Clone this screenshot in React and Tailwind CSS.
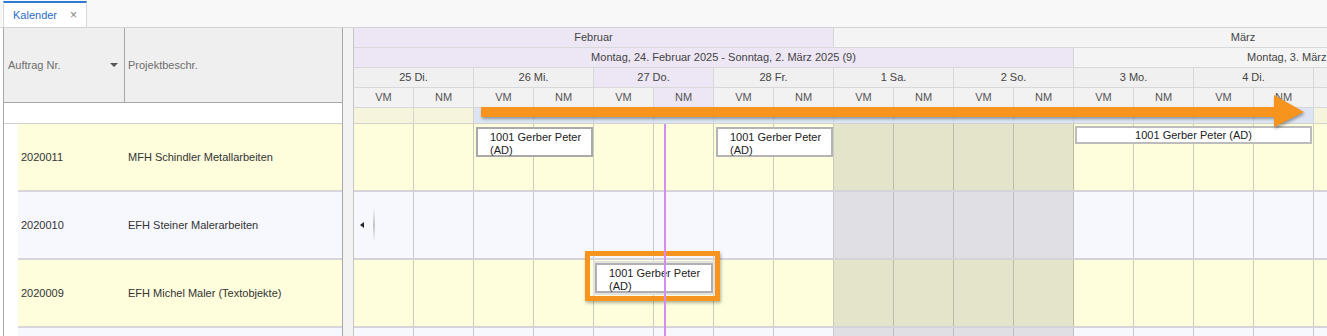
import React from "react";

const days = [
  { label: "25 Di." },
  { label: "26 Mi." },
  { label: "27 Do.", today: true },
  { label: "28 Fr." },
  { label: "1 Sa.", weekend: true },
  { label: "2 So.", weekend: true },
  { label: "3 Mo." },
  { label: "4 Di." },
  { label: "5 Mi." },
];

const halves = days.flatMap((d, i) => [
  { ...d, half: "VM", idx: i * 2 },
  { ...d, half: "NM", idx: i * 2 + 1 },
]);

const rows = [
  { nr: "2020011", name: "MFH Schindler Metallarbeiten", tone: "yellow" },
  { nr: "2020010", name: "EFH Steiner Malerarbeiten", tone: "blue" },
  { nr: "2020009", name: "EFH Michel Maler (Textobjekte)", tone: "yellow" },
  { nr: "", name: "", tone: "blue" },
];

function cellTone(tone, weekend) {
  if (tone === "yellow") {
    return weekend
      ? "bg-[#e3e4c9] border-[#bbbca6]"
      : "bg-[#fefedd] border-[#cbcbb9]";
  }
  return weekend
    ? "bg-[#dfdfe4] border-[#bdbdc3]"
    : "bg-[#f7f8fd] border-[#c9c9d0]";
}

function Appointment({ className, single }) {
  return (
    <div
      className={
        "absolute bg-white border-2 text-[#222] text-[11px] leading-[13px] " +
        className
      }
    >
      {single ? (
        <div className="text-center pt-[1px]">1001 Gerber Peter (AD)</div>
      ) : (
        <div className="pl-[12px] pt-[2px]">
          1001 Gerber Peter
          <br />
          (AD)
        </div>
      )}
    </div>
  );
}

export default function App() {
  return (
    <div
      className="w-[1327px] h-[336px] overflow-hidden bg-white text-[11px] text-[#333]"
      style={{ fontFamily: '"Liberation Sans", Arial, sans-serif' }}
    >
      {/* Tab-Leiste */}
      <div className="h-[28px] flex items-end pl-[3px] bg-[#f8f8f8] border-b border-[#d2d2d2]">
        <div className="h-[26px] w-[84px] bg-white border-t-2 border-t-[#2f7bd5] border-x border-x-[#d8d8d8] flex items-center pl-[9px]">
          <span className="text-[#2a6cc8] text-[11px]">Kalender</span>
          <span className="ml-auto mr-[9px] text-[#808080] text-[12px]">×</span>
        </div>
      </div>

      <div className="flex h-[308px] pl-[3px]">
        {/* Linke Tabelle */}
        <div className="w-[340px] shrink-0 border-l border-r border-[#a8a8a8] flex flex-col">
          <div className="h-[75px] shrink-0 flex bg-[#efefef] border-b border-[#a8a8a8] text-[#6e6e6e]">
            <div className="w-[121px] border-r border-[#a8a8a8] flex items-center pl-[4px] pr-[6px]">
              <span>Auftrag Nr.</span>
              <span className="ml-auto w-0 h-0 border-l-[4px] border-r-[4px] border-t-[4px] border-l-transparent border-r-transparent border-t-[#555]" />
            </div>
            <div className="flex-1 flex items-center pl-[3px]">Projektbeschr.</div>
          </div>
          <div className="h-[21px] shrink-0 bg-white border-b border-[#cfcfcf]" />
          {rows.map((r, i) => (
            <div key={i} className="h-[68px] shrink-0 flex">
              <div className="w-[14px] shrink-0 bg-white" />
              <div
                className={
                  "flex-1 flex items-center border-b-2 border-[#d6d6db] " +
                  (r.tone === "yellow" ? "bg-[#fefedd]" : "bg-[#f7f8fd]")
                }
              >
                <div className="w-[107px] pl-[3px]">{r.nr}</div>
                <div className="pl-[3px]">{r.name}</div>
              </div>
            </div>
          ))}
        </div>

        {/* Splitter */}
        <div className="w-[11px] shrink-0 bg-[#f3f3f3] border-r border-[#c6c6c6]" />

        {/* Planer */}
        <div className="relative flex-1 overflow-hidden bg-white text-[#444]">
          <div className="flex h-[20px] border-b border-[#d8d8d8]">
            <div className="w-[480px] shrink-0 bg-[#ece6f5] border-r border-[#d8d8d8] flex items-center justify-center">
              Februar
            </div>
            <div className="w-[818px] shrink-0 bg-[#f4f4f4] flex items-center justify-center">
              März
            </div>
          </div>
          <div className="flex h-[20px] border-b border-[#d8d8d8] whitespace-nowrap">
            <div className="w-[720px] shrink-0 bg-[#ece6f5] border-r border-[#d8d8d8] flex items-center justify-center pl-[20px]">
              Montag, 24. Februar 2025 - Sonntag, 2. März 2025 (9)
            </div>
            <div className="w-[600px] shrink-0 bg-[#f4f4f4] flex items-center pl-[173px]">
              Montag, 3. März 2025 - Sonntag, 9. März 2025 (10)
            </div>
          </div>
          <div className="flex h-[20px] border-b border-[#d8d8d8]">
            {days.map((d) => (
              <div
                key={d.label}
                className={
                  "w-[120px] shrink-0 border-r border-[#d8d8d8] flex items-center justify-center " +
                  (d.today ? "bg-[#ece6f5]" : "bg-[#f0f0f0]")
                }
              >
                {d.label}
              </div>
            ))}
          </div>
          <div className="flex h-[20px] border-b border-[#d8d8d8] text-[#555]">
            {halves.map((h) => (
              <div
                key={h.idx}
                className={
                  "w-[60px] shrink-0 border-r border-[#d8d8d8] flex items-center justify-center " +
                  (h.idx === 5 ? "bg-[#ece6f5]" : "bg-[#f2f2f2]")
                }
              >
                {h.half}
              </div>
            ))}
          </div>
          {/* Ganztages-Streifen */}
          <div className="flex h-[16px] border-b border-[#d2d2cc]">
            {halves.map((h) => (
              <div
                key={h.idx}
                className={
                  "w-[60px] shrink-0 border-r " +
                  (h.idx >= 2 && h.idx <= 15
                    ? "bg-[#dde5f5] border-[#cfd6e4]"
                    : "bg-[#f6f4dd] border-[#d6d4c4]")
                }
              />
            ))}
          </div>

          {rows.map((r, ri) => (
            <div key={ri} className="relative flex h-[68px] border-b-2 border-[#d3d3d9]">
              {halves.map((h) => (
                <div
                  key={h.idx}
                  className={"w-[60px] h-full shrink-0 border-r " + cellTone(r.tone, h.weekend)}
                />
              ))}
              {ri === 0 && (
                <>
                  <Appointment className="left-[122px] top-[3px] w-[117px] h-[30px] border-[#a9a9a9]" />
                  <Appointment className="left-[362px] top-[3px] w-[117px] h-[30px] border-[#b4b4b4]" />
                  <Appointment single className="left-[721px] top-[2px] w-[237px] h-[18px] border-[#bcbcbc]" />
                </>
              )}
              {ri === 1 && (
                <div className="absolute left-[6px] top-[16px] h-[34px] flex items-center">
                  <span className="w-0 h-0 border-t-[3px] border-b-[3px] border-r-[4px] border-t-transparent border-b-transparent border-r-[#222]" />
                  <span className="ml-[9px] w-[2px] h-[34px] bg-gradient-to-b from-transparent via-[#c2c2c6] to-transparent" />
                </div>
              )}
              {ri === 2 && (
                <>
                  <Appointment className="left-[241px] top-[3px] w-[118px] h-[30px] border-[#b0b0b0] shadow-[0_0_0_2px_#e2e2e2]" />
                  <div className="absolute left-[231px] top-[-9px] w-[135px] h-[50px] border-[5px] border-[#f7941d] shadow-[1px_2px_3px_rgba(0,0,0,0.3)]" />
                </>
              )}
            </div>
          ))}

          {/* aktuelle Zeit */}
          <div className="absolute left-[310px] top-[96px] bottom-0 w-[2px] bg-[#d48cf0]" />

          {/* Pfeil */}
          <svg
            className="absolute left-[124px] top-[66px] drop-shadow-[1px_2px_1.5px_rgba(0,0,0,0.35)]"
            width="832"
            height="38"
            viewBox="0 0 832 38"
          >
            <rect x="3" y="13" width="796" height="10" fill="#f7941d" />
            <polygon points="796,1 826,18 796,33" fill="#f7941d" />
          </svg>
        </div>
      </div>
    </div>
  );
}
